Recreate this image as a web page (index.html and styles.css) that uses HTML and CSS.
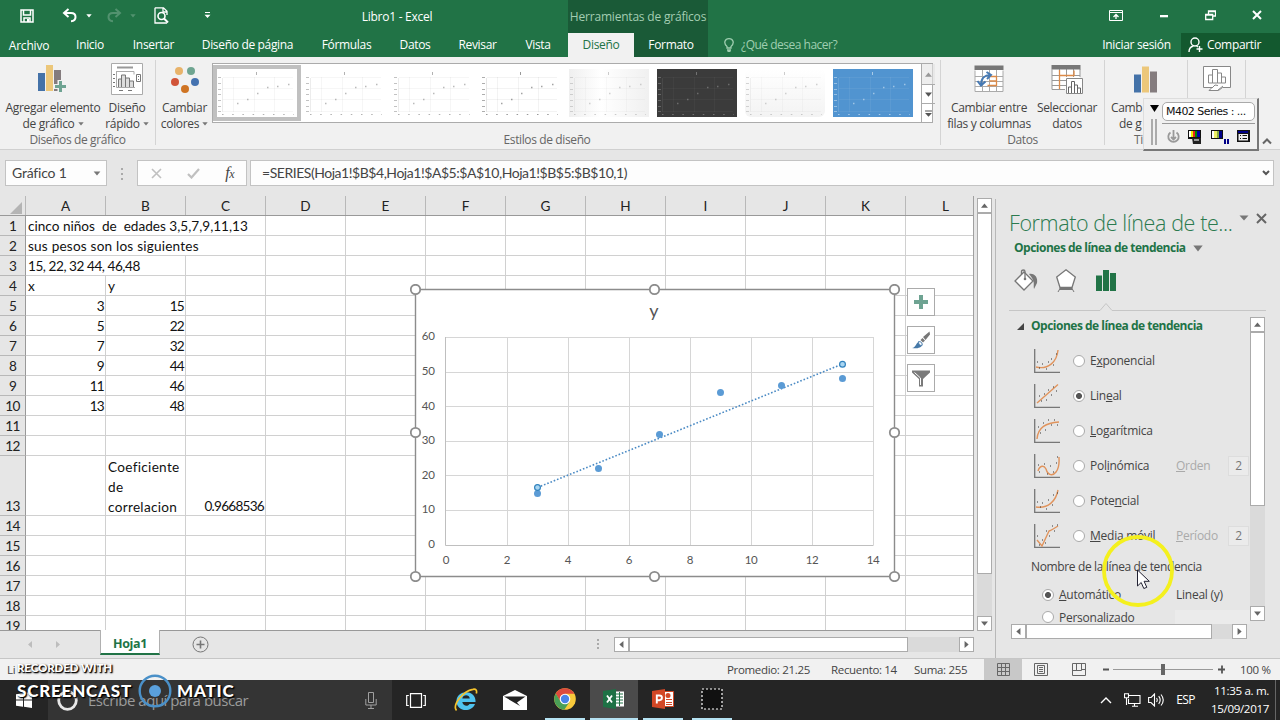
FILE: index.html
```html
<!DOCTYPE html>
<html lang="es">
<head>
  <meta charset="utf-8">
  <title>Libro1 - Excel</title>
  <link rel="stylesheet" href="styles.css">
</head>
<body>
  <!-- shared shapes -->
  <svg class="defs">
    <symbol id="mini" viewBox="0 0 80 48">
      <g stroke="currentColor" fill="none">
        <path d="M6 8.500H76M6 19.500H76M6 30.500H76M6 42.500H76M16.500 8V43M37.500 8V43M57.500 8V43" opacity=".06"/>
        <path d="M1 8.500H4M1 14.500H4M1 20.500H4M1 25.500H4M1 31.500H4M1 37.500H4M1 42.500H4" opacity=".4"/>
        <path d="M5 45.500H77" stroke-dasharray="1.500 8.700" opacity=".5"/>
        <path d="M5.500 9V43" opacity=".12"/>
        <path d="M39.500 3V6" opacity=".5"/>
        <path class="pts" d="M20 34.500h1.500M30 30.500h1.500M40 24.500h1.500M50 18.500h1.500M60 17.500h1.500M71 15.500h1.500" stroke-width="1.500"/>
      </g>
    </symbol>
    <symbol id="up" viewBox="0 0 15 15"><path d="M3.500 10h8L7.500 5.300z"/></symbol>
    <symbol id="down" viewBox="0 0 15 15"><path d="M3.500 5.300h8L7.500 10z"/></symbol>
    <symbol id="left" viewBox="0 0 15 15"><path d="M9.700 3.500v8L5 7.500z"/></symbol>
    <symbol id="right" viewBox="0 0 15 15"><path d="M5.300 3.500v8L10 7.500z"/></symbol>
    <symbol id="caret" viewBox="0 0 6 4"><path d="M.3.300h5.400L3 3.500z"/></symbol>
    <symbol id="bars" viewBox="0 0 24 27"><path d="M0 9h7v18H0z" fill="#4472a8"/><path d="M8 1h7v26H8z" fill="#ecc77a"/><path d="M16 6h7v21h-7z" fill="#847c7e"/></symbol>
  </svg>

  <header class="top">
    <div class="titlebar">
      <div class="qat">
        <span class="q-save"><svg width="14" height="14" viewBox="0 0 14 14"><path d="M1 1h12v12H1z M3.500 1v5h7V1 M4 13V9h6v4" fill="none" stroke="#fff" stroke-width="1.500"/><path d="M7 10h2v3H7z" fill="#fff"/></svg></span>
        <span class="q-undo"><svg width="16" height="15" viewBox="0 0 16 15"><path d="M6.500 1L2 5l4.500 4M2.500 5H9c6 0 6 8 0 8.300" fill="none" stroke="#fff" stroke-width="2"/></svg></span>
        <span class="q-arrow"><svg width="6" height="4" fill="#fff"><use href="#caret"/></svg></span>
        <span class="q-undo dim"><svg width="16" height="15" viewBox="0 0 16 15"><path d="M9.500 1L14 5 9.500 9M13.500 5H7C1 5 1 13 7 13.300" fill="none" stroke="#fff" stroke-width="2"/></svg></span>
        <span class="q-arrow dim"><svg width="6" height="4" fill="#fff"><use href="#caret"/></svg></span>
        <span class="q-view"><svg width="16" height="17" viewBox="0 0 16 17"><path d="M1 .800h8.500l3.500 3.500V8M1 .800V16h12M9 1v4h4" fill="none" stroke="#fff" stroke-width="1.300"/><circle cx="7.500" cy="9" r="3.500" fill="none" stroke="#fff" stroke-width="1.600"/><path d="M10 11.500l4 4" stroke="#fff" stroke-width="2"/></svg></span>
        <span class="q-more"><svg width="7" height="7" viewBox="0 0 7 7" fill="#fff"><path d="M1 0h5v1H1zM.500 2.800h6L3.500 6z"/></svg></span>
      </div>
      <div class="doc-title">Libro1 - Excel</div>
      <div class="context-title">Herramientas de gráficos</div>
      <div class="win-buttons">
        <svg width="14" height="11" viewBox="0 0 14 11" fill="none" stroke="#fff"><path d="M.500.500h13v10H.500zM.500 2.500h13"/><path d="M7 9V4.500M4.500 7L7 4.500 9.500 7" stroke-width="1.300"/></svg>
        <svg width="10" height="11" viewBox="0 0 10 11"><path d="M1 5h8v2.300H1z" fill="#fff"/></svg>
        <svg width="11" height="11" viewBox="0 0 11 11" fill="none" stroke="#fff"><path d="M.700 4.500h7v5h-7zM.500 5h7M3.500 4V1h7v5H8M3.500 1.500h7" stroke-width="1.300"/></svg>
        <svg width="10" height="11" viewBox="0 0 10 11"><path d="M1 1l8 8M9 1L1 9" stroke="#fff" stroke-width="2"/></svg>
      </div>
    </div>
    <nav class="tabs">
      <a class="w58 file">Archivo</a>
      <a class="w64">Inicio</a>
      <a class="w63">Insertar</a>
      <a class="w125">Diseño de página</a>
      <a class="w73">Fórmulas</a>
      <a class="w64">Datos</a>
      <a class="w61">Revisar</a>
      <a class="w60">Vista</a>
      <a class="active">Diseño</a>
      <a class="ctx">Formato</a>
      <span class="tell-me">
        <svg width="10" height="14" viewBox="0 0 10 14" fill="none" stroke="#9fceb0" stroke-width="1.300"><path d="M3 10V8.500C-1 5 1 .700 5 .700S11 5 7 8.500V10zM3 12h4M3.500 13.300h3"/></svg>
        ¿Qué desea hacer?
      </span>
      <span class="sign-in">Iniciar sesión</span>
      <span class="share">
        <svg width="15" height="16" viewBox="0 0 15 16" fill="none" stroke="#fff" stroke-width="1.400"><circle cx="7" cy="5" r="4"/><path d="M1 15c0-4 2-5.500 4.500-6M8.500 9l1.500 1M11.500 9v6M8.500 12h6"/></svg>
        Compartir
      </span>
    </nav>
  </header>

  <section class="ribbon">
    <div class="group g-layout">
      <div class="group-body">
        <div class="big-btn b-add">
          <svg width="30" height="30" viewBox="0 0 30 30"><use href="#bars" width="24" height="27"/><path d="M19.500 16h5v4h4v5h-4v4h-5v-4h-4v-5h4z" fill="#f1f1f1"/><path d="M21 17h3v4h4v3h-4v4h-3v-4h-4v-3h4z" fill="#6ea392"/></svg>
          <span>Agregar elemento</span><span>de gráfico <svg class="dd"><use href="#caret"/></svg></span>
        </div>
        <div class="big-btn b-quick">
          <svg width="32" height="32" viewBox="0 0 32 32" fill="none" stroke="#777"><path d="M.500.500h31v31H.500z" fill="#fff" stroke="#aaa"/><path d="M6 4.500h16" stroke="#999" stroke-width="2"/><path d="M5.500 8v16.500H24M6 8.500h17v3" stroke="#aaa"/><path d="M7.500 24v-8h3v8M10.500 24V12h4v12M14.500 24v-9h4v9M18.500 24v-6h4v6" fill="#ddd"/><path d="M25.500 11.500h4v7h-4zM27 13.500h1M27 16.500h1M8 27.500h4M17 27.500h4M2 11.500h2M2 15.500h2M2 19.500h2M2 23.500h2"/></svg>
          <span>Diseño</span><span>rápido <svg class="dd"><use href="#caret"/></svg></span>
        </div>
      </div>
      <div class="group-name">Diseños de gráfico</div>
    </div>

    <div class="group g-styles">
      <div class="group-body">
        <div class="big-btn b-colors">
          <svg width="30" height="30" viewBox="0 0 30 30"><circle cx="9" cy="7" r="4" fill="#e8b36a"/><circle cx="21" cy="7" r="4" fill="#6fa591"/><circle cx="5" cy="18" r="4" fill="#d15439"/><circle cx="25" cy="18" r="4" fill="#4472b0"/><circle cx="15" cy="25" r="4" fill="#cf7423"/></svg>
          <span>Cambiar</span><span>colores <svg class="dd"><use href="#caret"/></svg></span>
        </div>
        <div class="gallery">
          <svg class="thumb selected"><use href="#mini"/></svg>
          <svg class="thumb"><use href="#mini"/></svg>
          <svg class="thumb"><use href="#mini"/></svg>
          <svg class="thumb strong"><use href="#mini"/></svg>
          <svg class="thumb faded"><use href="#mini"/></svg>
          <svg class="thumb dark"><use href="#mini"/></svg>
          <svg class="thumb soft"><use href="#mini"/></svg>
          <svg class="thumb blue"><use href="#mini"/></svg>
          <div class="gallery-nav">
            <span class="off"><svg class="ar"><use href="#up"/></svg></span>
            <span><svg class="ar"><use href="#down"/></svg></span>
            <span><svg class="ar" viewBox="0 0 15 15"><path d="M3.500 4h8v1.200h-8zM3.500 7h8L7.500 11.200z"/></svg></span>
          </div>
        </div>
      </div>
      <div class="group-name">Estilos de diseño</div>
    </div>

    <div class="group g-data">
      <div class="group-body">
        <div class="big-btn b-swap">
          <svg width="30" height="28" viewBox="0 0 30 28" fill="none"><path d="M1 1h28v26H1z" fill="#fff"/><path d="M1 5.500v21h28v-21M1 11.500h28M1 16.500h28M1 21.500h28M8.500 5v21M15.500 5v21M22.500 5v21" stroke="#aaa"/><path d="M.500.500h29V5H.500z" fill="#777"/><path d="M15.500 11.500h7v9h-9M15.500 16h7" stroke="#dc8a48" stroke-width="1.300"/><path d="M7 20c0-7 4-10 9-10M12.500 7l4.500 3-4 4M3.500 16L7 20.500l4.500-4" stroke="#4679b3" stroke-width="2"/></svg>
          <span>Cambiar entre</span><span>filas y columnas</span>
        </div>
        <div class="big-btn b-select">
          <svg width="32" height="30" viewBox="0 0 32 30" fill="none"><path d="M1 1h28v25H1z" fill="#fff"/><path d="M1 5.500v20h13M29 5v8M1 11.500h28M1 16.500h14M1 21.500h14M8.500 5v21M15.500 5v8M22.500 5v8" stroke="#999"/><path d="M.500 1h29v4.500H.500z" fill="#777"/><path d="M8.500 6v19M8 11.500h15v-5" stroke="#dc8a48" stroke-width="1.300"/><path d="M15.500 14.500h16v15h-16z" fill="#fff" stroke="#888"/><path d="M17.500 29v-6h3v6M20.500 29V17.500h3V29M23.500 29v-8h3v8M26.500 29v-5h3v5" stroke="#666"/></svg>
          <span>Seleccionar</span><span>datos</span>
        </div>
      </div>
      <div class="group-name">Datos</div>
    </div>

    <div class="group g-type">
      <div class="group-body">
        <div class="big-btn b-type">
          <svg width="24" height="27"><use href="#bars"/></svg>
          <span>Camb</span><span>de g</span>
        </div>
      </div>
      <div class="group-name">Ti</div>
    </div>

    <div class="group g-place">
      <div class="big-btn">
        <svg width="28" height="26" viewBox="0 0 28 26" fill="none" stroke="#888"><path d="M.500.500h27v21h-8l-4 3H6l3-3H.500z" fill="#fff"/><path d="M5.500 17v-8h4v8zM9.500 17V3.500h5V17zM14.500 17V7h4v10zM18.500 17v-6h4v6z"/><path d="M9 22l3-3 3 .500M15 24l5-4"/></svg>
      </div>
    </div>
    <svg class="collapse" width="10" height="7" viewBox="0 0 10 7"><path d="M1 5.500L5 1.500l4 4" fill="none" stroke="#666" stroke-width="2"/></svg>
  </section>

  <section class="formula-bar">
    <div class="name-box">Gráfico 1<svg width="8" height="5"><use href="#caret"/></svg></div>
    <svg class="grip" width="3" height="12" viewBox="0 0 3 12" fill="#aaa"><path d="M0 0h2v2H0zM0 5h2v2H0zM0 10h2v2H0z"/></svg>
    <div class="fx-box">
      <svg width="11" height="11" viewBox="0 0 11 11"><path d="M1 1l9 9M10 1l-9 9" stroke="#c0c0c0" stroke-width="1.600"/></svg>
      <svg width="13" height="11" viewBox="0 0 13 11"><path d="M1 6l3.500 3.500L12 1" fill="none" stroke="#c0c0c0" stroke-width="2.200"/></svg>
      <span class="fx">f<small>x</small></span>
    </div>
    <div class="formula"><span>=SERIES(Hoja1!$B$4,Hoja1!$A$5:$A$10,Hoja1!$B$5:$B$10,1)</span><svg width="8" height="6" viewBox="0 0 8 6"><path d="M1 1l3 3 3-3" fill="none" stroke="#555" stroke-width="2"/></svg></div>
  </section>

  <main class="work">
    <div class="book">
      <div class="sheet-row">
        <div class="sheet">
          <div class="col-heads">
            <span class="corner"><svg width="12" height="12" viewBox="0 0 12 12"><path d="M12 0v12H0z" fill="#b4b4b4"/></svg></span>
            <span>A</span><span>B</span><span>C</span><span>D</span><span>E</span><span>F</span><span>G</span><span>H</span><span>I</span><span>J</span><span>K</span><span>L</span>
          </div>
          <div class="row"><b>1</b><span class="span3">cinco niños&nbsp; de&nbsp; edades 3,5,7,9,11,13</span></div>
          <div class="row"><b>2</b><span class="span3 wide">sus pesos son los siguientes</span></div>
          <div class="row"><b>3</b><span class="span2">15, 22, 32 44, 46,48</span></div>
          <div class="row"><b>4</b><span>x</span><span>y</span></div>
          <div class="row"><b>5</b><span class="num">3</span><span class="num">15</span></div>
          <div class="row"><b>6</b><span class="num">5</span><span class="num">22</span></div>
          <div class="row"><b>7</b><span class="num">7</span><span class="num">32</span></div>
          <div class="row"><b>8</b><span class="num">9</span><span class="num">44</span></div>
          <div class="row"><b>9</b><span class="num">11</span><span class="num">46</span></div>
          <div class="row"><b>10</b><span class="num">13</span><span class="num">48</span></div>
          <div class="row"><b>11</b></div>
          <div class="row"><b>12</b></div>
          <div class="row tall"><b>13</b><span></span><span class="wrap">Coeficiente<br>de<br>correlacion</span><span class="num">0.9668536</span></div>
          <div class="row"><b>14</b></div>
          <div class="row"><b>15</b></div>
          <div class="row"><b>16</b></div>
          <div class="row"><b>17</b></div>
          <div class="row"><b>18</b></div>
          <div class="row"><b>19</b></div>

          <svg class="chart" width="490" height="298" viewBox="410 284 490 298">
            <path d="M415.500 289.500h479v287h-479z" fill="#fff" stroke="#8c8c8c" stroke-width="1.400"/>
            <g stroke="#d6d6d6">
              <path d="M445.500 337.500h428M445.500 372.500h428M445.500 406.500h428M445.500 441.500h428M445.500 475.500h428M445.500 510.500h428"/>
              <path d="M507.500 337v208M568.500 337v208M629.500 337v208M690.500 337v208M751.500 337v208M812.500 337v208M873.500 337v208"/>
              <path d="M445.500 337v208.500h428" fill="none" stroke="#bfbfbf"/>
            </g>
            <text x="654" y="316.500" class="chart-title">y</text>
            <g class="ticks y">
              <text x="434.500" y="340">60</text><text x="434.500" y="375">50</text><text x="434.500" y="410">40</text><text x="434.500" y="444">30</text><text x="434.500" y="479">20</text><text x="434.500" y="513">10</text><text x="434.500" y="548">0</text>
            </g>
            <g class="ticks x">
              <text x="446" y="564">0</text><text x="507" y="564">2</text><text x="568" y="564">4</text><text x="629" y="564">6</text><text x="690" y="564">8</text><text x="751" y="564">10</text><text x="812" y="564">12</text><text x="873" y="564">14</text>
            </g>
            <path d="M537.500 487.500L842.500 364" stroke="#4a8ac4" stroke-width="1.600" stroke-dasharray="1.600 1.900"/>
            <g fill="#5b9bd5">
              <circle cx="537.500" cy="493.500" r="3.500"/><circle cx="598.500" cy="468.500" r="3.500"/><circle cx="659.500" cy="434.500" r="3.500"/><circle cx="720.500" cy="392.500" r="3.500"/><circle cx="781.500" cy="385.500" r="3.500"/><circle cx="842.500" cy="378.500" r="3.500"/>
            </g>
            <g fill="#a9d6f2" stroke="#3182bd" stroke-width="1.200"><circle cx="537.500" cy="487.500" r="2.900"/><circle cx="842.500" cy="364.300" r="2.900"/></g>
            <g fill="#fff" stroke="#8c8c8c" stroke-width="1.800">
              <circle cx="415.500" cy="289.500" r="4.700"/><circle cx="654.500" cy="289.500" r="4.700"/><circle cx="894.500" cy="289.500" r="4.700"/>
              <circle cx="415.500" cy="432.500" r="4.700"/><circle cx="894.500" cy="432.500" r="4.700"/>
              <circle cx="415.500" cy="576.500" r="4.700"/><circle cx="654.500" cy="576.500" r="4.700"/><circle cx="894.500" cy="576.500" r="4.700"/>
            </g>
          </svg>
          <div class="chart-tools">
            <span><svg width="14" height="14" viewBox="0 0 14 14"><path d="M5 0h4v5h5v4H9v5H5V9H0V5h5z" fill="#6ea392"/></svg></span>
            <span><svg width="18" height="18" viewBox="0 0 18 18"><path d="M17.500.500L11 6l2.500 3L18 3.500zM10.500 7l-2 2 2.500 2.500 2-2z" fill="#777"/><path d="M0 17c4 0 4-6 7.500-6.500 2 0 3 1.500 3 3C9.500 17 4 18 0 17z" fill="#4679a8"/><path d="M6.500 10.500c2.500 0 4 1.500 3.500 4-2.500 0-3.500-1.500-3.500-4z" fill="#fff" stroke="#4679a8" stroke-width=".800"/></svg></span>
            <span><svg width="18" height="17" viewBox="0 0 18 17"><path d="M0 .500h18v2L11 9v7.500H7V9L0 2.500z" fill="#7a7a7a"/><path d="M2.500 2.500L8.500 8v7" fill="none" stroke="#fff"/></svg></span>
          </div>
        </div>
        <div class="vscroll main-v">
          <span class="sb"><svg><use href="#up"/></svg></span><i></i><span class="track"></span><span class="sb"><svg><use href="#down"/></svg></span>
        </div>
      </div>
      <div class="sheet-tabs">
        <svg class="nav" width="34" height="7" viewBox="0 0 34 7" fill="#bdbdbd"><path d="M5 0v7L1 3.500zM29 0v7l4-3.500z"/></svg>
        <span class="sheet-tab">Hoja1</span>
        <svg class="add" width="17" height="17" viewBox="0 0 17 17" fill="none" stroke="#777"><circle cx="8.500" cy="8.500" r="7.500"/><path d="M8.500 4.500v8M4.500 8.500h8" stroke-width="1.600"/></svg>
        <svg class="tab-grip" width="2" height="10" viewBox="0 0 2 10" fill="#aaa"><path d="M0 0h2v2H0zM0 4h2v2H0zM0 8h2v2H0z"/></svg>
        <div class="hscroll main-h">
          <span class="sb"><svg><use href="#left"/></svg></span><i></i><span class="track"></span><span class="sb"><svg><use href="#right"/></svg></span>
        </div>
      </div>
    </div>

    <aside class="pane">
      <div class="pane-title"><h2>Formato de línea de te...</h2>
        <svg width="10" height="6" fill="#777" viewBox="0 0 10 6"><path d="M.500.500h9L5 5.500z"/></svg>
        <svg class="close" width="11" height="11" viewBox="0 0 11 11"><path d="M1 1l9 9M10 1l-9 9" stroke="#666" stroke-width="2"/></svg>
      </div>
      <div class="pane-sub">Opciones de línea de tendencia <svg width="10" height="7" fill="#777" viewBox="0 0 10 7"><path d="M.300.500h9.400L5 6.500z"/></svg></div>
      <div class="pane-icons">
        <svg width="24" height="23" viewBox="0 0 24 23"><path d="M10 3l9 9-9 9-9-9z" fill="#fff" stroke="#777" stroke-width="1.300"/><path d="M7.500 5V2.500C7.500.500 11 .500 11 2.500V9" fill="none" stroke="#777" stroke-width="1.300"/><circle cx="11" cy="10" r="1.300" fill="#777"/><path d="M15 5c6-1 9 4 8 9l-3 6c-1-5 2-7-5-15z" fill="#777"/></svg>
        <svg width="20" height="23" viewBox="0 0 20 23"><path d="M10 .800L19.300 8 16 18.500H4L.700 8z" fill="#fff" stroke="#777" stroke-width="1.300"/><path d="M4 18.500h12v2H4zM2 23l2-3.500M18 23l-2-3.500" fill="#777" stroke="#777"/></svg>
        <svg width="20" height="21" viewBox="0 0 20 21" fill="#217346"><path d="M0 5.500h6V21H0zM7 0h6v21H7zM14 3h6v18h-6z"/></svg>
      </div>
      <svg class="pane-rule" width="257" height="10" viewBox="0 0 257 10"><path d="M0 8.500h91l6-7 6 7h154" fill="none" stroke="#c6c6c6"/></svg>
      <div class="pane-body">
        <div class="opts">
          <div class="section"><svg width="7" height="7" viewBox="0 0 7 7"><path d="M7 0v7H0z" fill="#444"/></svg>Opciones de línea de tendencia</div>
          <div class="opt"><svg class="kind" viewBox="0 0 26 26"><path class="ax" d="M.700 1v23.300H26"/><path class="cv" d="M2 19c12 3 21-5 22-17"/><path class="dt" d="M3 14h1M5 20h1M8 16h1M12 21h1M14 14h1M17 11h1M19 17h1M22 6h1"/></svg><span class="radio"></span><span>E<u>x</u>ponencial</span></div>
          <div class="opt"><svg class="kind" viewBox="0 0 26 26"><path class="ax" d="M.700 1v23.300H26"/><path class="cv" d="M3 20L24 1.500"/><path class="dt" d="M5 13h1M7 18h1M10 11h1M12 17h1M14 7h1M17 12h1M19 4h1M22 8h1"/></svg><span class="radio on"></span><span>Lin<u>e</u>al</span></div>
          <div class="opt"><svg class="kind" viewBox="0 0 26 26"><path class="ax" d="M.700 1v23.300H26"/><path class="cv" d="M3 21C4 9 12 5 25 4"/><path class="dt" d="M4 9h1M6 15h1M9 5h1M11 12h1M14 2h1M17 7h1M20 2h1M23 7h1"/></svg><span class="radio"></span><span><u>L</u>ogarítmica</span></div>
          <div class="opt"><svg class="kind" viewBox="0 0 26 26"><path class="ax" d="M.700 1v23.300H26"/><path class="cv" d="M4 18C6 12 10 12 12 16c2 7 7 7 10 3 4-5 3-10 3-15"/><path class="dt" d="M4 12h1M5 19h1M10 11h1M13 21h1M16 13h1M19 19h1M22 10h1M23 4h1"/></svg><span class="radio"></span><span class="lab">Pol<u>i</u>nómica</span><span class="dis"><u>O</u>rden</span><span class="spin">2</span></div>
          <div class="opt"><svg class="kind" viewBox="0 0 26 26"><path class="ax" d="M.700 1v23.300H26"/><path class="cv" d="M2 19c12 2 20-6 22-17"/><path class="dt" d="M3 14h1M8 15h1M6 19h1M12 21h1M14 12h1M18 17h1M19 7h1M23 5h1"/></svg><span class="radio"></span><span>Pote<u>n</u>cial</span></div>
          <div class="opt"><svg class="kind" viewBox="0 0 26 26"><path class="ax" d="M.700 1v23.300H26"/><path class="cv" d="M3 17l5 6 7-15c3-1 6-3 9-5"/><path class="dt" d="M3 13h1M5 22h1M8 17h1M11 20h1M12 8h1M15 13h1M18 3h1M20 8h1M23 2h1"/></svg><span class="radio"></span><span class="lab"><u>M</u>edia móvil</span><span class="dis"><u>P</u>eríodo</span><span class="spin">2</span></div>
          <div class="name-label">Nombre de la línea de tendencia</div>
          <div class="name-opt"><span class="radio on"></span><span class="lab2"><u>A</u>utomático</span><span>Lineal (y)</span></div>
          <div class="name-opt last"><span class="radio"></span><span class="lab2">Personalizado</span><span class="blank"></span></div>
        </div>
        <div class="vscroll pane-v">
          <span class="sb"><svg><use href="#up"/></svg></span><i></i><span class="track"></span><span class="sb"><svg><use href="#down"/></svg></span>
        </div>
      </div>
      <div class="hscroll pane-h">
        <span class="sb"><svg><use href="#left"/></svg></span><i></i><span class="track"></span><span class="sb"><svg><use href="#right"/></svg></span>
      </div>
    </aside>
  </main>

  <footer class="status">
    <span class="ready">Li</span>
    <span class="avg">Promedio: 21.25</span>
    <span class="count">Recuento: 14</span>
    <span class="sum">Suma: 255</span>
    <span class="view on"><svg width="13" height="13" viewBox="0 0 13 13" fill="none" stroke="#666"><path d="M.500.500h12v12H.500zM.500 4.500h12M.500 8.500h12M4.500.500v12M8.500.500v12"/></svg></span>
    <span class="view"><svg width="14" height="13" viewBox="0 0 14 13" fill="none" stroke="#666"><path d="M.500.500h13v12H.500zM3.500 2.500h7v8h-7zM5 4.500h4M5 6.500h4M5 8.500h4"/></svg></span>
    <span class="view"><svg width="14" height="13" viewBox="0 0 14 13" fill="none" stroke="#666"><path d="M.500.500h13v12H.500zM4.500.500v7M9.500.500v7M.500 7.500h9M9.500 6.500h4"/></svg></span>
    <svg class="zoom" width="122" height="13" viewBox="0 0 122 13"><path d="M0 6.500h6M115 6.500h8M119 2.500v8" stroke="#555" stroke-width="1.800"/><path d="M10 6.500h100" stroke="#999"/><path d="M58 1h4v11h-4z" fill="#666"/></svg>
    <span class="pct">100 %</span>
  </footer>

  <footer class="taskbar">
    <span class="start"><svg width="16" height="16" viewBox="0 0 16 16" fill="#fff"><path d="M0 2.200L7 1.200V7.500H0zM8 1L16 0v7.500H8zM0 8.500h7v6.300l-7-1zM8 8.500h8V16l-8-1.200z"/></svg></span>
    <div class="search">
      <svg width="21" height="21" viewBox="0 0 21 21"><circle cx="10.500" cy="10.500" r="8.800" fill="none" stroke="#e8e8e8" stroke-width="2.800"/></svg>
      <span>Escribe aquí para buscar</span>
      <svg class="mic" width="12" height="17" viewBox="0 0 12 17" fill="none" stroke="#a0a0a0"><path d="M3.500.500h5v10h-5zM.800 7v6h10.400V7M6 13v3.500M3 16.500h6"/></svg>
    </div>
    <span class="task t-view"><svg width="20" height="15" viewBox="0 0 20 15" fill="none" stroke="#fff" stroke-width="1.200"><path d="M4.500.700h11v13.600h-11zM2.800 2.500H.700v10h2.100M17.200 2.500h2.100v10h-2.100"/></svg></span>
    <span class="task t-ie"><svg width="24" height="24" viewBox="0 0 24 24"><path d="M21.500 14H8.300c.5 4 5.700 5 7.200 2h5.500c-3.500 9-18.500 8-18.500-3C2.500 1.500 22.500 1 21.500 14zM8.300 10.500h7.500c-.5-4.200-6.800-4.200-7.500 0z" fill="#4fc3ef"/><path d="M2.500 22.500C-2 17 9 3 19 1.300c3-.6 4.200 1 3.300 4.200" fill="none" stroke="#f5c32c" stroke-width="1.700"/></svg></span>
    <span class="task t-mail"><svg width="24" height="20" viewBox="0 0 24 20"><path d="M0 6L12 0l12 6v14H0z" fill="#fff"/><path d="M1 6.500h21.500L14 12.500l3 3.500z" fill="#222"/></svg></span>
    <span class="task t-chrome open"><svg width="22" height="22" viewBox="0 0 22 22"><circle cx="11" cy="11" r="10.800" fill="#f8c93b"/><path d="M11 .200A10.800 10.800 0 0 1 20.400 5.700H11L6.300 13.700 1.700 5.600A10.800 10.800 0 0 1 11 .200z" fill="#dc4a3d"/><path d="M1.700 5.600l5 8.100 8.600.500-5 7.600A10.800 10.800 0 0 1 1.700 5.600z" fill="#4a9f57"/><circle cx="11" cy="11" r="5.300" fill="#fff"/><circle cx="11" cy="11" r="4.200" fill="#4a83e8"/></svg></span>
    <span class="task t-excel open"><svg width="22" height="20" viewBox="0 0 22 20"><path d="M12 2.500h9v15h-9z" fill="#fff"/><path d="M13 5h7M13 8h7M13 11h7M13 14h7M16.500 3v14" stroke="#217346"/><path d="M0 2l13-2v20L0 18z" fill="#1e7145"/><path d="M4 6.500l5 7M9 6.500l-5 7" stroke="#fff" stroke-width="1.800"/></svg></span>
    <span class="task t-ppt open"><svg width="22" height="20" viewBox="0 0 22 20"><path d="M12 2.500h9.500v15H12z" fill="#fff" stroke="#d24726"/><path d="M14 10.500h6M14 13.500h6M14 15.500h6" stroke="#d24726"/><circle cx="16" cy="6.500" r="2.500" fill="#d24726"/><path d="M0 2l13-2v20L0 18z" fill="#d24726"/><path d="M4.800 14.500V6.500h2.500c3.500 0 3.500 4.700 0 4.700H5" fill="none" stroke="#fff" stroke-width="1.900"/></svg></span>
    <span class="task t-rec open"><svg width="22" height="22" viewBox="0 0 22 22"><path d="M1 1h20v20H1z" fill="#111" stroke="#fff" stroke-width="1.200" stroke-dasharray="2 2"/></svg></span>
    <div class="tray">
      <svg width="12" height="8" viewBox="0 0 12 8"><path d="M1 7l5-5 5 5" fill="none" stroke="#fff" stroke-width="1.400"/></svg>
      <svg width="17" height="14" viewBox="0 0 17 14" fill="none" stroke="#fff" stroke-width="1.100"><path d="M5 2.500h11v8H4.500V6M8 13.300h6M10.500 10.500v2.500M.500.700h4v4h-4zM2.500 5v7"/></svg>
      <svg width="17" height="14" viewBox="0 0 17 14" fill="none" stroke="#fff" stroke-width="1.100"><path d="M.600 4.500h2.500L6.500 1v12L3 9.500H.600zM8.500 5q1.500 2 0 4M10.700 3.200q3 3.800 0 7.600M13 1.500q4.500 5.500 0 11"/></svg>
      <span class="lang">ESP</span>
      <span class="clock">11:35 a. m.<br>15/09/2017</span>
      <i class="peek"></i>
    </div>
  </footer>

  <!-- floating printer toolbar -->
  <div class="printer">
    <div class="p-left"><svg width="9" height="7" viewBox="0 0 9 7"><path d="M0 0h9L4.500 7z"/></svg><i></i></div>
    <div class="p-main">
      <div class="p-name">M402 Series : ...</div>
      <div class="p-icons">
        <svg width="13" height="14" viewBox="0 0 13 14" fill="none" stroke="#999" stroke-width="1.800"><path d="M3.500 2.500a5.200 5.200 0 1 0 6 0"/><path d="M6.500 0v9M4 7l2.500 2.500L9 7"/></svg>
        <svg width="14" height="14" viewBox="0 0 14 14"><path d="M0 0h13v9H0z" fill="#111"/><path d="M1 1h2v6H1z" fill="#fff"/><path d="M3 1h2v6H3z" fill="#ee0"/><path d="M5 1h2v6H5z" fill="#e22"/><path d="M7 1h2v6H7z" fill="#080"/><path d="M9 1h3v6H9z" fill="#00a"/><path d="M4 8h9v6H5z" fill="#222"/><path d="M6 9h5v2H6z" fill="#999"/></svg>
        <svg width="18" height="14" viewBox="0 0 18 14"><path d="M0 0h12v9H0z" fill="#111"/><path d="M1 1h3v7H1z" fill="#fff"/><path d="M3 1h3v7H3z" fill="#ee6"/><path d="M6 1h2v7H6z" fill="#8a4"/><path d="M8 1h3v7H8z" fill="#008"/><path d="M13 9h2v5h-2zM16 9h2v5h-2z" fill="#008"/></svg>
        <svg width="13" height="12" viewBox="0 0 13 12"><path d="M0 0h13v12H0z" fill="#111"/><path d="M1 1h10v2H1z" fill="#008"/><path d="M1.500 4h9.500v6.500H1.500z" fill="#eee"/><path d="M3 5.500h1M5.500 5.500H10M3 8.500h1M5.500 8.500H10" stroke="#111"/></svg>
      </div>
    </div>
  </div>

  <!-- recorder watermark and pointer -->
  <div class="mark">
    <div class="mark-small">RECORDED WITH</div>
    <div class="mark-big"><span class="w1">SCREENCAST</span><svg width="34" height="34" viewBox="0 0 34 34"><circle cx="17" cy="17" r="15.300" fill="none" stroke="#4a90c8" stroke-width="2.400"/><circle cx="17" cy="17" r="6" fill="#5aa0dc"/></svg><span class="w2">MATIC</span></div>
  </div>
  <svg class="pointer" width="74" height="74" viewBox="0 0 74 74"><circle cx="37" cy="37" r="34" fill="none" stroke="#f4f01e" stroke-width="3.800"/><path d="M36.500 36v16l3.700-3.500 2.600 6 3-1.200-2.700-6h5.200z" fill="#fff" stroke="#223" stroke-width="1"/></svg>
</body>
</html>
```
FILE: styles.css
```css
* {
  box-sizing: border-box;
}
body {
  margin: 0;
  width: 1280px;
  height: 720px;
  overflow: hidden;
  position: relative;
  display: flex;
  flex-direction: column;
  background: #e6e6e6;
  color: #444;
  font: 12px/16px "Open Sans", "Noto Sans", sans-serif;
  letter-spacing: -0.33px;
}
svg {
  display: block;
  flex: none;
}
i { display: block; }
.defs {
  position: absolute;
  width: 0;
  height: 0;
}

/* title bar and tabs */
.top {
  height: 57px;
  background: #217346;
  color: #fff;
}
.titlebar {
  height: 33px;
  display: flex;
}
.qat {
  display: flex;
  width: 226px;
  height: 31px;
}
.qat span {
  display: flex;
  align-items: center;
  justify-content: center;
}
.q-save { width: 54px; }
.q-undo { width: 32px; }
.q-arrow { width: 5px; }
.q-arrow + .q-undo { margin-left: 7px; }
.q-view { width: 54px; }
.q-more { width: 36px; }
.dim { opacity: .22; }
.doc-title {
  width: 342px;
  text-align: center;
  line-height: 34px;
  letter-spacing: -0.25px;
}
.context-title {
  width: 140px;
  background: #1a5a37;
  color: #a3cdb2;
  text-align: center;
  line-height: 34px;
  white-space: nowrap;
  letter-spacing: -0.2px;
}
.win-buttons {
  flex: 1;
  display: flex;
  align-items: center;
  justify-content: flex-end;
  gap: 36px;
  padding: 0 18px 3px 0;
}
.tabs {
  height: 24px;
  display: flex;
  line-height: 24px;
  text-align: center;
}
.w58 { width: 58px; letter-spacing: -0.2px; }
.w60 { width: 60px; }
.w61 { width: 61px; }
.w63 { width: 63px; }
.w64 { width: 64px; }
.w73 { width: 73px; }
.w125 { width: 125px; }
.file { padding-top: 1px; }
.active {
  width: 66px;
  background: #f1f1f1;
  color: #217346;
}
.ctx {
  width: 74px;
  background: #1a5a37;
}
.tell-me {
  width: 380px;
  padding-left: 16px;
  display: flex;
  align-items: center;
  gap: 7px;
  color: #9fceb0;
  letter-spacing: -0.5px;
}
.sign-in { width: 93px; padding-left: 4px; }
.share {
  flex: 1;
  background: #13592f;
  display: flex;
  align-items: center;
  gap: 4px;
  padding-left: 7px;
}

/* ribbon */
.ribbon {
  height: 93px;
  background: #f1f1f1;
  border-bottom: 1px solid #d0d0d0;
  display: flex;
  padding-top: 3px;
}
.group {
  height: 85px;
  border-right: 1px solid #d4d4d4;
  display: flex;
  flex-direction: column;
}
.group-body {
  height: 73px;
  display: flex;
}
.group-name {
  text-align: center;
  line-height: 16px;
  color: #666;
  letter-spacing: -0.38px;
}
.g-layout { width: 156px; }
.g-styles { width: 785px; }
.g-data { width: 164px; }
.g-type { width: 83px; }
.g-place { width: 58px; }
.g-styles .group-name { padding-right: 2px; }
.big-btn {
  display: flex;
  flex-direction: column;
  align-items: center;
  white-space: nowrap;
}
.big-btn > svg {
  height: 32px;
  margin: 3px 0 5px;
}
.big-btn > span {
  height: 16px;
  display: flex;
  align-items: center;
  gap: 3px;
}
.dd {
  width: 6px;
  height: 4px;
  fill: #777;
}
.b-add { width: 106px; }
.b-quick { width: 42px; }
.b-colors { width: 57px; }
.b-swap { width: 96px; }
.b-select { width: 60px; }
.b-type { width: 83px; align-items: flex-start; padding-left: 6px; }
.b-type > svg { margin-left: 23px; }
.b-type > span + span { padding-left: 8px; }
.g-type .group-name { text-align: left; padding-left: 29px; }
.gallery {
  margin-top: 3px;
  margin-left: -1px;
  width: 721px;
  height: 60px;
  background: #fff;
  border: 1px solid #ababab;
  display: flex;
  align-items: center;
  gap: 8px;
}
.thumb {
  width: 80px;
  height: 48px;
  color: #666;
}
.pts { opacity: .45; }
.thumb.strong { color: #333; }
.thumb.selected {
  box-sizing: content-box;
  border: 4px solid #c0c0c0;
  margin-right: -4px;
}
.thumb.faded { background: linear-gradient(90deg, #efefef, #fff 40%, #f0f0f0); color: #999; }
.thumb.soft { background: linear-gradient(#fff, #f3f3f3); border-radius: 6px; color: #999; }
.thumb.dark { background: #3b3b3b; color: #aaa; }
.thumb.blue { background: #5194d0; color: #fff; }
.gallery-nav {
  width: 14px;
  height: 58px;
  margin-left: auto;
  border-left: 1px solid #ababab;
}
.gallery-nav span {
  height: 19px;
  display: flex;
  align-items: center;
  justify-content: center;
}
.gallery-nav span + span { border-top: 1px solid #ababab; }
.gallery-nav .off { height: 20px; background: #e3e3e3; opacity: .6; }
.ar {
  width: 13px;
  height: 13px;
  fill: #555;
}
.g-place .big-btn > svg { margin-top: 6px; height: 26px; }
.collapse { margin: 78px 0 0 16px; }

/* formula bar */
.formula-bar {
  height: 46px;
  padding: 10px 6px 0 5px;
  display: flex;
  font: 14px/24px Lato, sans-serif;
  letter-spacing: -0.46px;
}
.name-box, .fx-box, .formula {
  height: 26px;
  background: #fdfdfd;
  border: 1px solid #c3c3c3;
  display: flex;
  align-items: center;
}
.name-box {
  width: 102px;
  padding: 0 5px 0 6px;
  justify-content: space-between;
  letter-spacing: -0.2px;
}
.name-box svg { fill: #777; }
.grip { margin: 8px 13px 0 14px; }
.fx-box {
  width: 110px;
  padding: 0 12px 0 13px;
  justify-content: space-between;
}
.fx {
  font: italic 16px/20px "Liberation Serif", serif;
  color: #444;
}
.fx small { font-size: 12px; }
.formula {
  flex: 1;
  margin-left: 3px;
  padding: 0 3px 0 11px;
  justify-content: space-between;
}

/* sheet */
.work {
  height: 462px;
  display: flex;
}
.book {
  width: 995px;
  display: flex;
  flex-direction: column;
}
.sheet-row {
  height: 435px;
  display: flex;
}
.sheet {
  position: relative;
  width: 974px;
  height: 435px;
  overflow: hidden;
  border-right: 1px solid #a0a0a0;
  border-bottom: 1px solid #999;
  background: #fff;
  color: #111;
  font: 13.6px/20px Lato, sans-serif;
  letter-spacing: 0;
}
.col-heads {
  width: 1000px;
  height: 20px;
  display: flex;
  background: #e6e6e6;
  border-bottom: 1px solid #999;
  text-align: center;
  color: #222;
}
.col-heads span {
  width: 80px;
  border-right: 1px solid #b8b8b8;
}
.col-heads .corner {
  width: 26px;
  padding: 6px 0 0 10px;
}
.row {
  height: 20px;
  width: 1000px;
  display: flex;
  border-bottom: 1px solid #d0d0d0;
  /* column lines every 80px after the row header */
  background: repeating-linear-gradient(90deg, transparent 0 79px, #d0d0d0 79px 80px) 26px 0 no-repeat;
  line-height: 21px;
}
.row b {
  width: 26px;
  height: 20px;
  flex: none;
  font-weight: normal;
  text-align: center;
  background: #e6e6e6;
  border-right: 1px solid #999;
  border-bottom: 1px solid #b8b8b8;
  color: #222;
  letter-spacing: -0.7px;
}
.row span {
  width: 80px;
  padding: 0 2px;
  white-space: nowrap;
}
.row .span2, .row .span3 {
  width: 159px;
  margin-right: 1px;
  background: #fff;
}
.row .span2 { letter-spacing: -0.45px; }
.row .span3 { width: 239px; }
.row .wide { letter-spacing: 0.2px; }
.row .num { text-align: right; letter-spacing: -0.75px; }
.row.tall, .row.tall b { height: 60px; }
.row.tall b, .row.tall .num { padding-top: 40px; }
.row .wrap { line-height: 20px; padding-top: 1px; letter-spacing: 0.3px; }
.chart {
  position: absolute;
  left: 410px;
  top: 88px;
}
.chart-title { font-size: 18px; fill: #555; text-anchor: middle; }
.ticks { font-size: 11.5px; fill: #555; letter-spacing: -0.35px; }
.ticks.y { text-anchor: end; }
.ticks.x { text-anchor: middle; }
.chart-tools {
  position: absolute;
  left: 907px;
  top: 92px;
  display: flex;
  flex-direction: column;
  gap: 10px;
}
.chart-tools span {
  width: 28px;
  height: 28px;
  background: #fff;
  border: 1px solid #ababab;
  display: flex;
  align-items: center;
  justify-content: center;
}

/* scroll bars */
.vscroll, .hscroll {
  display: flex;
  background: #dadada;
}
.vscroll { width: 15px; flex-direction: column; }
.hscroll { height: 15px; }
.vscroll i, .hscroll i {
  background: #fff;
  border: 1px solid #ababab;
}
.track { flex: 1; }
.sb {
  width: 15px;
  height: 15px;
  background: #fff;
  border: 1px solid #ababab;
}
.sb svg {
  width: 13px;
  height: 13px;
  fill: #666;
}
.main-v {
  height: 433px;
  margin: 2px 0 0 3px;
}
.main-v i { height: 361px; }
.main-h {
  width: 360px;
  margin-left: 15px;
}
.main-h i { width: 279px; }
.sheet-tabs {
  height: 27px;
  display: flex;
  align-items: center;
  padding-bottom: 1px;
}
.nav { margin-left: 27px; }
.sheet-tab {
  width: 60px;
  height: 25px;
  margin-left: 39px;
  margin-top: -1px;
  align-self: flex-start;
  position: relative;
  background: #fff;
  border: 1px solid #b0b0b0;
  border-width: 0 1px;
  border-bottom: 2px solid #217346;
  color: #217346;
  font-weight: bold;
  font-size: 12.5px;
  line-height: 27px;
  text-align: center;
}
.add { margin-left: 32px; }
.tab-grip { margin-left: 388px; }

/* format pane */
.pane {
  width: 285px;
  margin-top: 3px;
  border-left: 1px solid #b8b8b8;
  padding-left: 13px;
}
.pane-title {
  height: 38px;
  display: flex;
  align-items: center;
  color: #2b7a4f;
}
.pane-title h2 {
  width: 230px;
  margin: 9px 0 0;
  font: 300 21.5px/30px "Open Sans", sans-serif;
  letter-spacing: -0.4px;
  white-space: nowrap;
}
.pane-title .close { margin: 1px 0 0 7px; }
.pane-sub {
  height: 22px;
  padding-left: 5px;
  display: flex;
  align-items: center;
  gap: 7px;
  color: #217346;
  font-weight: bold;
  letter-spacing: -0.5px;
}
.pane-icons {
  height: 43px;
  padding: 0 0 0 5px;
  display: flex;
  align-items: center;
  gap: 18px;
}
.pane-icons svg + svg + svg { margin-left: 2px; }
.pane-body {
  display: flex;
  height: 311px;
}
.opts { width: 241px; }
.section {
  height: 31px;
  padding: 0 0 3px 8px;
  display: flex;
  align-items: center;
  gap: 7px;
  color: #217346;
  font-weight: bold;
  letter-spacing: -0.5px;
}
.opt {
  height: 35px;
  padding-left: 25px;
  display: flex;
  align-items: center;
}
.kind {
  width: 26px;
  height: 26px;
  margin-right: 13px;
  fill: none;
}
.ax { stroke: #777; stroke-width: 1.3; }
.cv { stroke: #e0935c; stroke-width: 1.4; }
.dt { stroke: #333; }
.opt, .name-opt { letter-spacing: -0.25px; }
.radio {
  width: 12px;
  height: 12px;
  margin-right: 5px;
  flex: none;
  border: 1px solid #aaa;
  border-radius: 50%;
  background: #fff;
}
.radio.on {
  background: radial-gradient(circle, #555 0 2.6px, #fff 3.4px);
}
.lab { width: 86px; }
.dis { width: 52px; color: #aaa; }
.spin {
  width: 21px;
  height: 20px;
  border: 1px solid #ddd;
  background: #ebebeb;
  color: #777;
  line-height: 18px;
  text-align: center;
}
.name-label {
  height: 31px;
  padding-left: 22px;
  line-height: 27px;
  letter-spacing: -0.36px;
}
.name-opt {
  height: 22px;
  padding-left: 33px;
  display: flex;
  align-items: center;
}
.lab2 { width: 117px; }
.last { line-height: 13px; }
.blank {
  width: 75px;
  height: 14px;
  background: #ebebeb;
}
.pane-v { height: 304px; margin-top: 5px; }
.pane-v i { height: 174px; }
.pane-h {
  width: 236px;
  margin: 1px 0 0 2px;
}
.pane-h i { width: 186px; }

/* status bar */
.status {
  height: 22px;
  display: flex;
  align-items: center;
  background: #f1f1f1;
  border-top: 1px solid #c6c6c6;
  font-size: 11.5px;
}
.ready { width: 727px; padding-left: 7px; }
.avg { width: 104px; }
.count { width: 83px; }
.sum { width: 70px; }
.view {
  width: 38px;
  height: 21px;
  display: flex;
  align-items: center;
  justify-content: center;
}
.view.on { background: #c8c8c8; }
.zoom { margin-left: 5px; }
.pct { margin-left: 15px; white-space: nowrap; }

/* taskbar */
.taskbar {
  height: 40px;
  display: flex;
  background: #252525;
  color: #fff;
}
.start {
  width: 48px;
  padding: 12px 0 0 16px;
}
.search {
  width: 344px;
  background: #343434;
  display: flex;
  align-items: center;
  padding: 0 15px 0 9px;
  color: #9b9b9b;
  font-size: 15px;
}
.search span { margin-left: 10px; flex: 1; white-space: nowrap; letter-spacing: -0.47px; }
.task {
  width: 40px;
  display: flex;
  align-items: center;
  justify-content: center;
}
.open { border-bottom: 2px solid #b5e2f2; }
.t-view { width: 48px; }
.t-ie { width: 52px; }
.t-mail { width: 44px; margin: 0 3px 0 1px; }
.t-chrome { margin: 0 5px; }
.t-excel { width: 48px; background: #4b4b4b; }
.t-ppt { margin: 0 4px 0 5px; }
.t-rec { margin: 0 4.5px; }
.tray {
  flex: 1;
  display: flex;
  align-items: center;
  justify-content: flex-end;
  gap: 10px;
  padding-right: 4px;
}
.tray svg + svg { margin-left: 2px; }
.tray svg + svg + svg { margin-left: -3px; }
.lang { margin-left: 1px; letter-spacing: -0.6px; }
.clock {
  margin-left: 6px;
  text-align: right;
  line-height: 18px;
  font-size: 11.6px;
  letter-spacing: -0.35px;
}
.peek {
  width: 1px;
  height: 40px;
  margin-left: -4px;
  background: #666;
}

/* things floating above the window */
.printer {
  position: absolute;
  left: 1143px;
  top: 98px;
  width: 116px;
  height: 53px;
  padding: 3px 2px 0 6px;
  display: flex;
  background: #f0f0f0;
  border: 1px solid #ddd;
  border-right: 2px solid #777;
  border-bottom: 2px solid #777;
}
.p-left { width: 12px; padding-top: 3px; }
.p-left i {
  width: 6px;
  height: 26px;
  margin: 7px 0 0 1px;
  border: 2px solid #aaa;
  border-width: 0 2px;
}
.p-main { width: 93px; }
.p-name {
  height: 19px;
  padding-left: 3px;
  background: #fff;
  border: 1px solid #aaa;
  border-radius: 5px;
  color: #111;
  font: 11px/17px "DejaVu Sans", sans-serif;
  letter-spacing: -0.55px;
  white-space: nowrap;
}
.p-icons {
  margin-top: 2px;
  padding: 6px 5px 0 5px;
  border-top: 1px solid #999;
  display: flex;
  justify-content: space-between;
}
.mark {
  position: absolute;
  left: 17px;
  top: 660px;
  color: #fff;
  font-family: Lato, sans-serif;
  font-weight: 900;
  text-shadow: 1px 1px 1px #000, 1px 1px 2px #000;
}
.mark-small { font-size: 11.5px; line-height: 15px; letter-spacing: -0.1px; }
.mark-big {
  display: flex;
  align-items: center;
  margin-top: -1px;
  font-size: 17px;
  letter-spacing: 0.8px;
}
.w1 { width: 121px; }
.w2 { margin-left: 5px; }
.pointer {
  position: absolute;
  left: 1101px;
  top: 534px;
}
```
